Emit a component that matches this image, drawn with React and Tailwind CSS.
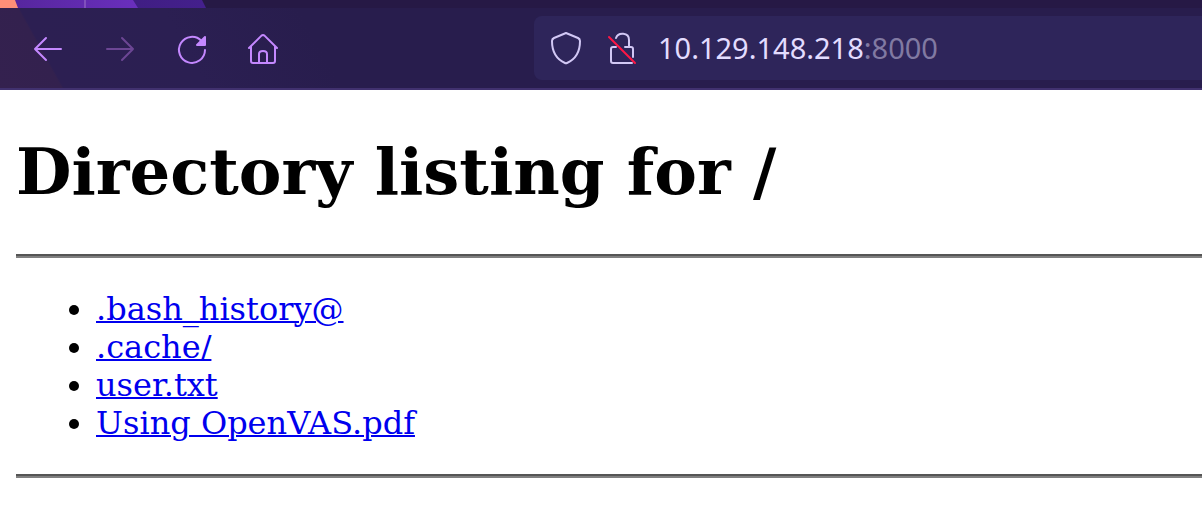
const files = [".bash_history@", ".cache/", "user.txt", "Using OpenVAS.pdf"];

function Icon({ children, className = "" }) {
  return (
    <svg viewBox="0 0 32 32" fill="none" stroke="currentColor" strokeWidth="2" strokeLinecap="round" strokeLinejoin="round" className={`block size-8 overflow-visible ${className}`} aria-hidden="true">
      {children}
    </svg>
  );
}

function TabStrip() {
  return (
    <div className="h-2 overflow-hidden bg-[#261945]">
      <svg width="260" height="8" viewBox="0 0 260 8" className="block" aria-hidden="true">
        <defs>
          <linearGradient id="band" x1="0" x2="1">
            <stop offset="0" stopColor="#54259a" />
            <stop offset="1" stopColor="#6a2fbd" />
          </linearGradient>
          <linearGradient id="fade" x1="0" x2="1">
            <stop offset="0" stopColor="#381a70" />
            <stop offset="1" stopColor="#44208d" />
          </linearGradient>
        </defs>
        <path d="M0 0H202L206 8H0Z" fill="url(#fade)" />
        <path d="M0 0H133L138 8H0Z" fill="url(#band)" />
        <path d="M0 0H15L18 8H0Z" fill="#ff8f78" />
        <path d="M84 0H86V8H84Z" fill="#8050bd" />
      </svg>
    </div>
  );
}

function Toolbar() {
  return (
    <nav aria-label="Browser" className="flex h-[82px] items-center border-b-2 border-[#41316f] bg-[linear-gradient(61deg,#34214f_0px,#33214e_54px,#2c1f52_56px,#2b1f52_180px,#281d4d_300px,#281d4d_100%)]">
      <div className="flex flex-1 items-center gap-10 pl-8 text-[#c488ff]">
        <button type="button" aria-label="Back">
          <Icon><path d="M3 17H29M14 6L3 17L14 28" /></Icon>
        </button>
        <button type="button" aria-label="Forward" disabled className="text-[#6c4694]">
          <Icon><path d="M3 17H29M18 6L29 17L18 28" /></Icon>
        </button>
        <button type="button" aria-label="Reload">
          <Icon>
            <path d="M29 18A13 13 0 1 1 25.500 9" />
            <path d="M29 5V13H21Z" fill="currentColor" />
          </Icon>
        </button>
        <button type="button" aria-label="Home">
          <Icon>
            <path d="M1 16L13.500 3.600Q15 2.400 16.500 3.600L29 16M3 14.500V29Q3 31 5 31H25Q27 31 27 29V14.500M11 30V22Q11 19 15 19Q19 19 19 22V30" />
          </Icon>
        </button>
      </div>
      <div className="flex h-16 w-[668px] items-center rounded-l-lg bg-[#2e255a] pl-4 text-[#d2c8f5]">
        <button type="button" aria-label="Tracking protection">
          <Icon><path d="M16 1L28 6Q30 7 30 9C30 20 26 27 17 31Q16 31.500 15 31C6 27 2 20 2 9Q2 7 4 6Z" /></Icon>
        </button>
        <button type="button" aria-label="Connection not secure" className="ml-6">
          <Icon>
            <path d="M10 6C12 0 23 0 23 8V15M19 15H25Q27 15 27 17V25M10 15H7Q5 15 5 17V29Q5 31 7 31H26" />
            <path d="M3 5L29 31" stroke="#ff1744" />
          </Icon>
        </button>
        <a href="#" className="ml-5 font-['Noto_Sans',sans-serif] text-[29px] leading-10 text-[#e3dcff]">
          10.129.148.218<span className="text-[#817aa2]">:8000</span>
        </a>
      </div>
    </nav>
  );
}

export default function App() {
  return (
    <div className="min-h-screen bg-white text-black">
      <header>
        <TabStrip />
        <Toolbar />
      </header>
      <main className="pl-4 font-['DejaVu_Serif',serif]">
        <h1 className="pt-11 pb-11 text-[64px] leading-[76px] font-bold">Directory listing for /</h1>
        <hr className="h-1 border-t-2 border-b-2 border-t-[#555] border-b-[#808080]" />
        <ul className="my-8 list-disc pl-20 text-[32px] leading-[38px]">
          {files.map((name) => (
            <li key={name}>
              <a href="#" className="text-[#0000ee] underline decoration-2">{name}</a>
            </li>
          ))}
        </ul>
        <hr className="h-1 border-t-2 border-b-2 border-t-[#555] border-b-[#808080]" />
      </main>
    </div>
  );
}
